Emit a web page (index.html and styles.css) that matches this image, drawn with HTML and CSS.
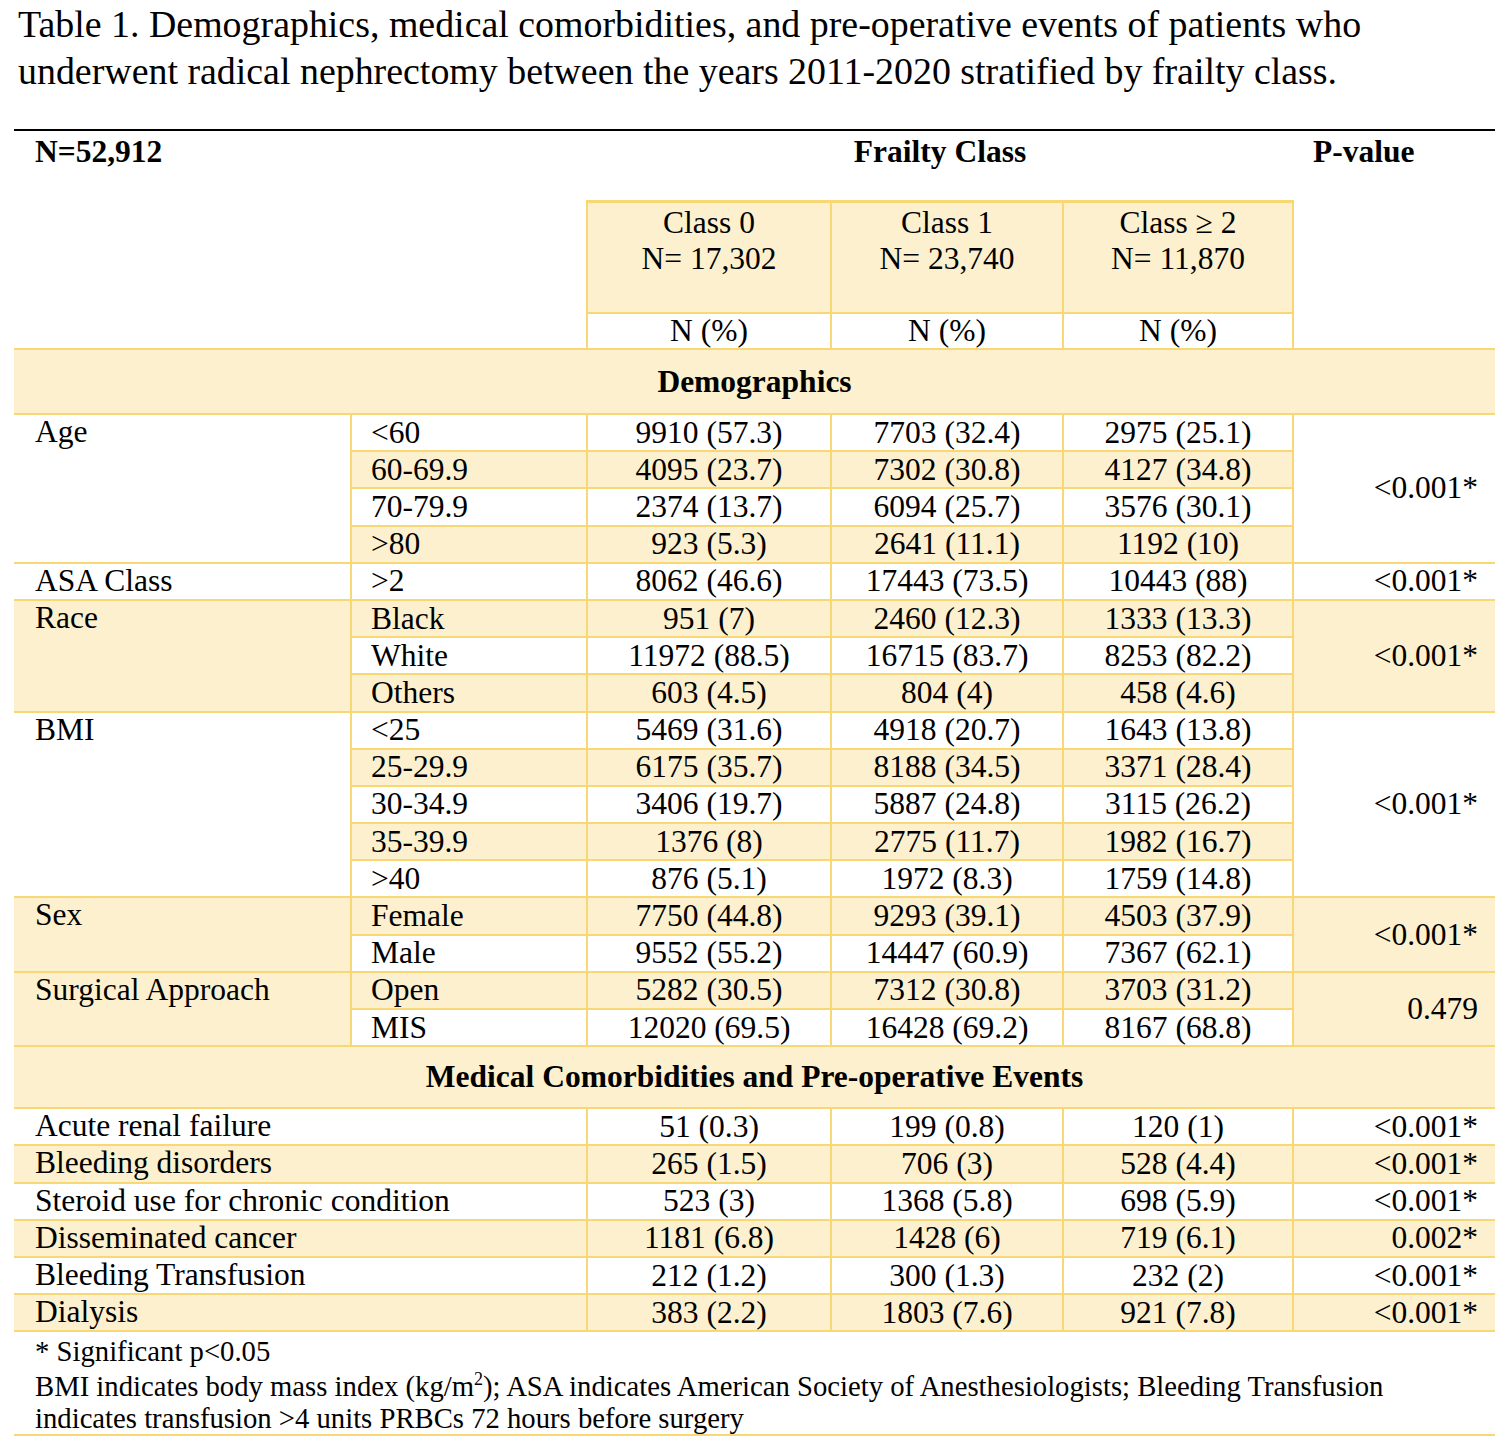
FILE: index.html
```html
<!DOCTYPE html>
<html lang="en">
<head>
<meta charset="utf-8">
<title>Table 1</title>
<link rel="stylesheet" href="styles.css">
</head>
<body>
<h1 class="caption">Table 1. Demographics, medical comorbidities, and pre-operative events of patients who underwent radical nephrectomy between the years 2011-2020 stratified by frailty class.</h1>
<table class="t">
  <colgroup>
    <col class="c1"><col class="c2"><col class="c3"><col class="c4"><col class="c5"><col class="c6">
  </colgroup>
  <thead>
    <tr class="h1">
      <th colspan="2" class="hn">N=52,912</th>
      <th colspan="3" class="hf">Frailty Class</th>
      <th class="hp">P-value</th>
    </tr>
    <tr class="h2">
      <td colspan="2" class="blank"></td>
      <td class="cls">Class 0<br>N= 17,302</td>
      <td class="cls">Class 1<br>N= 23,740</td>
      <td class="cls">Class ≥ 2<br>N= 11,870</td>
      <td class="blank"></td>
    </tr>
    <tr class="h3">
      <td colspan="2" class="blank"></td>
      <td class="np">N (%)</td>
      <td class="np">N (%)</td>
      <td class="np">N (%)</td>
      <td class="blank"></td>
    </tr>
  </thead>
  <tbody>
    <tr class="sec"><th colspan="6">Demographics</th></tr>

    <tr><td rowspan="4" class="cat">Age</td><td class="sub">&lt;60</td><td class="num">9910 (57.3)</td><td class="num">7703 (32.4)</td><td class="num">2975 (25.1)</td><td rowspan="4" class="p">&lt;0.001*</td></tr>
    <tr class="y"><td class="sub">60-69.9</td><td class="num">4095 (23.7)</td><td class="num">7302 (30.8)</td><td class="num">4127 (34.8)</td></tr>
    <tr><td class="sub">70-79.9</td><td class="num">2374 (13.7)</td><td class="num">6094 (25.7)</td><td class="num">3576 (30.1)</td></tr>
    <tr class="y"><td class="sub">&gt;80</td><td class="num">923 (5.3)</td><td class="num">2641 (11.1)</td><td class="num">1192 (10)</td></tr>

    <tr><td class="cat">ASA Class</td><td class="sub">&gt;2</td><td class="num">8062 (46.6)</td><td class="num">17443 (73.5)</td><td class="num">10443 (88)</td><td class="p">&lt;0.001*</td></tr>

    <tr class="y"><td rowspan="3" class="cat">Race</td><td class="sub">Black</td><td class="num">951 (7)</td><td class="num">2460 (12.3)</td><td class="num">1333 (13.3)</td><td rowspan="3" class="p">&lt;0.001*</td></tr>
    <tr><td class="sub">White</td><td class="num">11972 (88.5)</td><td class="num">16715 (83.7)</td><td class="num">8253 (82.2)</td></tr>
    <tr class="y"><td class="sub">Others</td><td class="num">603 (4.5)</td><td class="num">804 (4)</td><td class="num">458 (4.6)</td></tr>

    <tr><td rowspan="5" class="cat">BMI</td><td class="sub">&lt;25</td><td class="num">5469 (31.6)</td><td class="num">4918 (20.7)</td><td class="num">1643 (13.8)</td><td rowspan="5" class="p">&lt;0.001*</td></tr>
    <tr class="y"><td class="sub">25-29.9</td><td class="num">6175 (35.7)</td><td class="num">8188 (34.5)</td><td class="num">3371 (28.4)</td></tr>
    <tr><td class="sub">30-34.9</td><td class="num">3406 (19.7)</td><td class="num">5887 (24.8)</td><td class="num">3115 (26.2)</td></tr>
    <tr class="y"><td class="sub">35-39.9</td><td class="num">1376 (8)</td><td class="num">2775 (11.7)</td><td class="num">1982 (16.7)</td></tr>
    <tr><td class="sub">&gt;40</td><td class="num">876 (5.1)</td><td class="num">1972 (8.3)</td><td class="num">1759 (14.8)</td></tr>

    <tr class="y"><td rowspan="2" class="cat">Sex</td><td class="sub">Female</td><td class="num">7750 (44.8)</td><td class="num">9293 (39.1)</td><td class="num">4503 (37.9)</td><td rowspan="2" class="p">&lt;0.001*</td></tr>
    <tr><td class="sub">Male</td><td class="num">9552 (55.2)</td><td class="num">14447 (60.9)</td><td class="num">7367 (62.1)</td></tr>

    <tr class="y"><td rowspan="2" class="cat">Surgical Approach</td><td class="sub">Open</td><td class="num">5282 (30.5)</td><td class="num">7312 (30.8)</td><td class="num">3703 (31.2)</td><td rowspan="2" class="p">0.479</td></tr>
    <tr><td class="sub">MIS</td><td class="num">12020 (69.5)</td><td class="num">16428 (69.2)</td><td class="num">8167 (68.8)</td></tr>

    <tr class="sec sec2"><th colspan="6">Medical Comorbidities and Pre-operative Events</th></tr>

    <tr><td colspan="2" class="cat">Acute renal failure</td><td class="num">51 (0.3)</td><td class="num">199 (0.8)</td><td class="num">120 (1)</td><td class="p">&lt;0.001*</td></tr>
    <tr class="y"><td colspan="2" class="cat">Bleeding disorders</td><td class="num">265 (1.5)</td><td class="num">706 (3)</td><td class="num">528 (4.4)</td><td class="p">&lt;0.001*</td></tr>
    <tr><td colspan="2" class="cat">Steroid use for chronic condition</td><td class="num">523 (3)</td><td class="num">1368 (5.8)</td><td class="num">698 (5.9)</td><td class="p">&lt;0.001*</td></tr>
    <tr class="y"><td colspan="2" class="cat">Disseminated cancer</td><td class="num">1181 (6.8)</td><td class="num">1428 (6)</td><td class="num">719 (6.1)</td><td class="p">0.002*</td></tr>
    <tr><td colspan="2" class="cat">Bleeding Transfusion</td><td class="num">212 (1.2)</td><td class="num">300 (1.3)</td><td class="num">232 (2)</td><td class="p">&lt;0.001*</td></tr>
    <tr class="y"><td colspan="2" class="cat">Dialysis</td><td class="num">383 (2.2)</td><td class="num">1803 (7.6)</td><td class="num">921 (7.8)</td><td class="p">&lt;0.001*</td></tr>
  </tbody>
  <tfoot>
    <tr>
      <td colspan="6" class="foot">
        <p class="f1">* Significant p&lt;0.05</p>
        <p class="f2">BMI indicates body mass index (kg/m<sup>2</sup>); ASA indicates American Society of Anesthesiologists; Bleeding Transfusion indicates transfusion &gt;4 units PRBCs 72 hours before surgery</p>
      </td>
    </tr>
  </tfoot>
</table>
</body>
</html>
```

FILE: styles.css
```css
html, body {
  margin: 0;
  padding: 0;
  background: #ffffff;
  color: #000000;
  font-family: "Liberation Serif", "Times New Roman", serif;
}

.caption {
  margin: 1px 0 0 18px;
  max-width: 1420px;
  font-size: 37.9px;
  line-height: 47px;
  font-weight: normal;
}

.t {
  margin: 34px 0 0 14px;
  width: 1481px;
  border-collapse: collapse;
  table-layout: fixed;
  border-top: 2px solid #000000;
  font-size: 31.5px;
  line-height: 30px;
}

.c1 { width: 337px; }
.c2 { width: 236px; }
.c3 { width: 244px; }
.c4 { width: 232px; }
.c5 { width: 230px; }
.c6 { width: 202px; }

.t th, .t td {
  padding: 0;
}

/* header */
.h1 th {
  height: 63px;
  vertical-align: top;
  padding-top: 6px;
  line-height: 30px;
  font-weight: bold;
  border: none;
}
.hn { text-align: left; padding-left: 21px !important; }
.hf { text-align: center; }
.hp { text-align: left; padding-left: 20px !important; }

.blank { border: none; }

.cls {
  height: 107px;
  background: #fcf0ce;
  text-align: center;
  vertical-align: top;
  padding-top: 2px !important;
  line-height: 36px;
  border: 2px solid #f8d775;
  border-top: 3px solid #f8d775;
}

.np {
  height: 34px;
  text-align: center;
  vertical-align: middle;
  border: 2px solid #f8d775;
}

/* sections */
.sec th {
  height: 63px;
  background: #fcf0ce;
  font-weight: bold;
  text-align: center;
  vertical-align: middle;
  border-top: 2px solid #f8d775;
  border-bottom: 2px solid #f8d775;
}
.sec2 th {
  height: 60px;
}

/* body cells */
.t tbody tr { height: 37.2px; }
.t tbody tr.sec { height: auto; }
.t tbody td {
  vertical-align: middle;
  border: 2px solid #f8d775;
}
.t tbody tr.y td { background: #fcf0ce; }

.t tbody td.cat {
  border-left: none;
  text-align: left;
  vertical-align: top;
  padding-left: 21px;
  padding-top: 2px;
}
.t tbody td.sub {
  text-align: left;
  padding-left: 19px;
}
.t tbody td.num { text-align: center; }
.t tbody td.p {
  border-right: none;
  text-align: right;
  padding-right: 17px;
}

/* footnote */
.foot {
  border-top: 2px solid #f8d775;
  border-bottom: 2px solid #f8d775;
  padding: 3px 60px 0 21px !important;
  font-size: 28.7px;
}
.foot p { margin: 0; }
.f1 { line-height: 32px; }
.f2 { line-height: 32px; margin-top: 3px !important; }
.f2 sup {
  font-size: 18px;
  line-height: 0;
  vertical-align: 11px;
}
```
